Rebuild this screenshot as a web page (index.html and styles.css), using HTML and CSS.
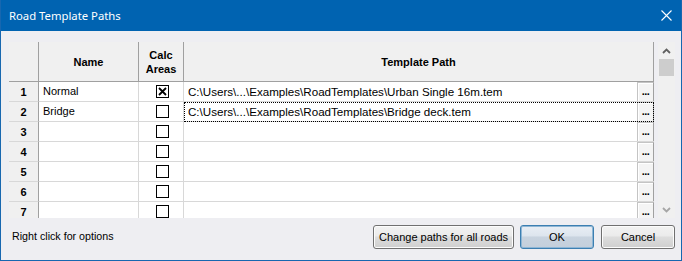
FILE: index.html
```html
<!DOCTYPE html>
<html lang="en">
<head>
    <meta charset="UTF-8">
    <title>Road Template Paths</title>
    <link rel="stylesheet" href="styles.css">
</head>
<body>
    <div class="dialog">
        <div class="titlebar">
            <span class="title">Road Template Paths</span>
            <svg class="close" width="11" height="11" viewBox="0 0 11 11">
                <path d="M0.5 0.5 L10.5 10.5 M10.5 0.5 L0.5 10.5" stroke="#fff" stroke-width="1.1" fill="none"/>
            </svg>
        </div>

        <div class="content">
            <div class="grid-area">
                <div class="grid">
                    <!-- header -->
                    <div class="hc corner"></div>
                    <div class="hc">Name</div>
                    <div class="hc">Calc<br>Areas</div>
                    <div class="hc">Template Path</div>

                    <div class="rh">1</div>
                    <div class="cell name">Normal</div>
                    <div class="cell check"><span class="cb checked"><svg width="13" height="13" viewBox="0 0 13 13"><path d="M3 3 L10 10 M10 3 L3 10" stroke="#000" stroke-width="1.8" fill="none"/></svg></span></div>
                    <div class="cell path"><span class="txt">C:\Users\...\Examples\RoadTemplates\Urban Single 16m.tem</span><span class="ell">...</span></div>

                    <div class="rh">2</div>
                    <div class="cell name">Bridge</div>
                    <div class="cell check"><span class="cb"></span></div>
                    <div class="cell path focus"><span class="txt">C:\Users\...\Examples\RoadTemplates\Bridge deck.tem</span><span class="ell">...</span></div>

                    <div class="rh">3</div>
                    <div class="cell name"></div>
                    <div class="cell check"><span class="cb"></span></div>
                    <div class="cell path"><span class="txt"></span><span class="ell">...</span></div>

                    <div class="rh">4</div>
                    <div class="cell name"></div>
                    <div class="cell check"><span class="cb"></span></div>
                    <div class="cell path"><span class="txt"></span><span class="ell">...</span></div>

                    <div class="rh">5</div>
                    <div class="cell name"></div>
                    <div class="cell check"><span class="cb"></span></div>
                    <div class="cell path"><span class="txt"></span><span class="ell">...</span></div>

                    <div class="rh">6</div>
                    <div class="cell name"></div>
                    <div class="cell check"><span class="cb"></span></div>
                    <div class="cell path"><span class="txt"></span><span class="ell">...</span></div>

                    <div class="rh">7</div>
                    <div class="cell name"></div>
                    <div class="cell check"><span class="cb"></span></div>
                    <div class="cell path"><span class="txt"></span><span class="ell">...</span></div>
                </div>

                <div class="vscroll">
                    <div class="arrow">
                        <svg width="9" height="6" viewBox="0 0 9 6"><path d="M1 5 L4.5 1.5 L8 5" stroke="#606060" stroke-width="1.8" fill="none"/></svg>
                    </div>
                    <div class="thumb"></div>
                    <div class="track"></div>
                    <div class="arrow">
                        <svg width="9" height="6" viewBox="0 0 9 6"><path d="M1 1 L4.5 4.5 L8 1" stroke="#a6a6a6" stroke-width="1.8" fill="none"/></svg>
                    </div>
                </div>
            </div>

            <div class="footer">
                <span class="hint">Right click for options</span>
                <div class="buttons">
                    <button class="btn wide">Change paths for all roads</button>
                    <button class="btn ok">OK</button>
                    <button class="btn cancel">Cancel</button>
                </div>
            </div>
        </div>
    </div>
</body>
</html>
```

FILE: styles.css
```css
body {
    margin: 0;
    font-family: "Liberation Sans", Arial, sans-serif;
    font-size: 11px;
    color: #000;
}
.dialog {
    width: 682px;
    height: 261px;
    box-sizing: border-box;
    border: 1px solid #1767b0;
    border-top: 0;
    background: #eeeef2;
    display: flex;
    flex-direction: column;
}
.titlebar {
    height: 31px;
    flex: none;
    background: #0063b1;
    color: #fff;
    display: flex;
    align-items: center;
    justify-content: space-between;
    padding: 0 9px 0 8px;
}
.title {
    font-family: "Noto Sans", "Open Sans", sans-serif;
    font-size: 11.3px;
    margin-top: -1px;
}
.close {
    display: block;
    margin-top: -1px;
}
.content {
    flex: 1;
    padding: 11px 6px 0 8px;
    display: flex;
    flex-direction: column;
}
.grid-area {
    display: flex;
    gap: 4px;
    height: 176px;
}
.grid {
    display: grid;
    grid-template-columns: 30px 100px 45px 470px;
    grid-template-rows: 40px repeat(7, 20px);
    height: 176px;
    overflow: hidden;
    background: #fff;
}
.grid > div {
    box-sizing: border-box;
}
.hc {
    background: #f0f0f0;
    border-right: 1px solid #a0a0a0;
    border-bottom: 1px solid #a0a0a0;
    font-weight: bold;
    text-align: center;
    display: flex;
    align-items: center;
    justify-content: center;
    line-height: 14px;
}
.rh {
    background: #f0f0f0;
    border-right: 1px solid #a0a0a0;
    border-bottom: 1px solid #d8d8d8;
    font-weight: bold;
    display: flex;
    align-items: center;
    justify-content: center;
    padding-top: 1px;
}
.cell {
    border-right: 1px solid #d8d8d8;
    border-bottom: 1px solid #d8d8d8;
    display: flex;
    align-items: center;
}
.name {
    padding-left: 4px;
    padding-bottom: 1px;
}
.check {
    justify-content: center;
    padding-left: 2px;
}
.cb {
    width: 13px;
    height: 13px;
    box-sizing: border-box;
    border: 1px solid #000;
    background: #fff;
    position: relative;
}
.cb svg {
    position: absolute;
    left: -1px;
    top: -1px;
}
.path {
    border-right: 0;
    padding-left: 4px;
    align-items: stretch;
}
.path .txt {
    flex: 1;
    display: flex;
    align-items: center;
    padding-bottom: 1px;
    font-size: 11.6px;
    white-space: nowrap;
    overflow: hidden;
}
.focus {
    outline: 1px dotted #000;
    outline-offset: -1px;
}
.ell {
    width: 17px;
    box-sizing: border-box;
    border: 1px solid #c4c4c4;
    border-bottom: 0;
    border-right-color: #a0a0a0;
    background: #f4f4f4;
    box-shadow: inset 1px 1px 0 #fff;
    font-weight: bold;
    text-align: center;
    line-height: 17px;
    letter-spacing: -0.5px;
}
.vscroll {
    width: 17px;
    background: #f0f0f0;
    display: flex;
    flex-direction: column;
}
.arrow {
    height: 17px;
    display: flex;
    align-items: center;
    justify-content: center;
}
.thumb {
    height: 17px;
    margin: 0 0 0 1px;
    width: 15px;
    background: #cdcdcd;
}
.track {
    flex: 1;
}
.footer {
    display: flex;
    justify-content: space-between;
    align-items: center;
    margin-top: 7px;
}
.hint {
    padding-left: 3px;
    margin-top: -2px;
    font-size: 10.7px;
}
.buttons {
    display: flex;
    gap: 6px;
}
.btn {
    height: 24px;
    font-family: "Liberation Sans", Arial, sans-serif;
    font-size: 11px;
    color: #000;
    border: 1px solid #707070;
    border-radius: 3px;
    background: linear-gradient(#f2f2f2 0%, #ebebeb 45%, #dddddd 50%, #cfcfcf 100%);
    box-shadow: inset 0 0 0 1px #fcfcfc;
    padding: 0;
}
.wide {
    width: 141px;
}
.ok {
    width: 74px;
    border-color: #3c7fb1;
    background: linear-gradient(#e9eef4 0%, #dde5ee 45%, #c8d3df 50%, #c4cfdb 100%);
    box-shadow: inset 0 0 0 1px #8fb6d5;
}
.cancel {
    width: 74px;
    margin-left: 1px;
}
```
